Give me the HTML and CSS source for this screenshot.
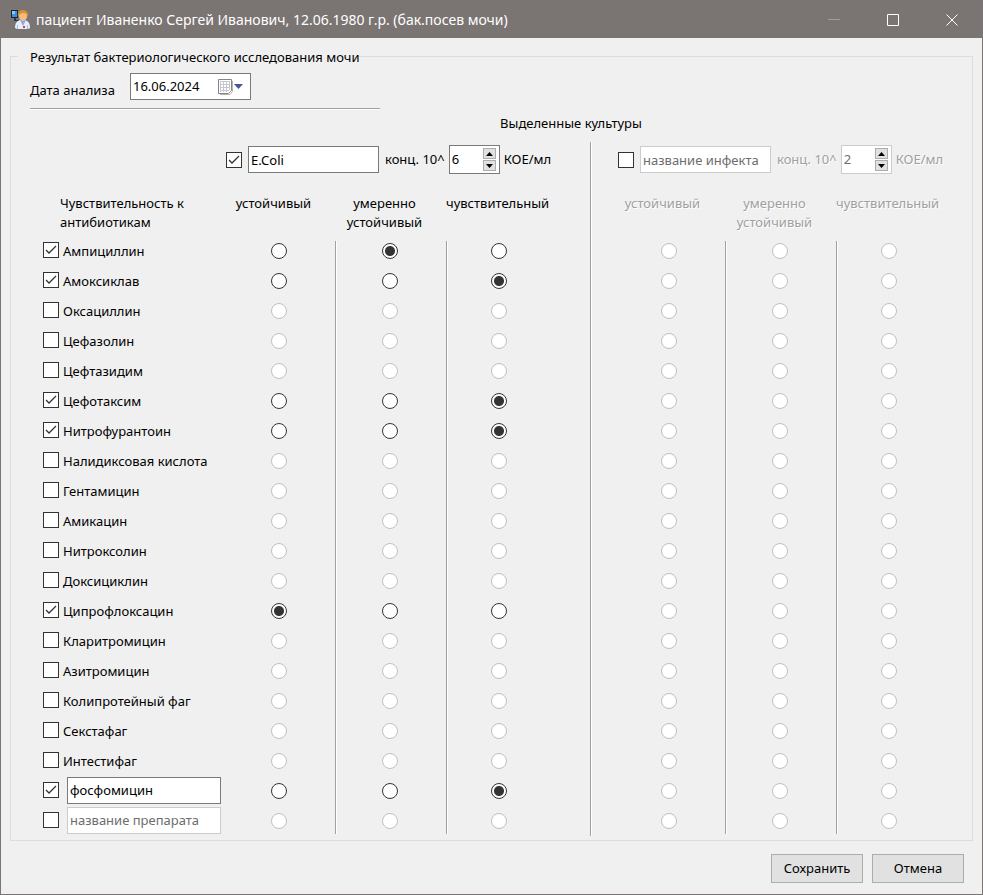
FILE: index.html
```html
<!DOCTYPE html>
<html lang="ru">
<head>
<meta charset="utf-8">
<title>пациент Иваненко Сергей Иванович, 12.06.1980 г.р. (бак.посев мочи)</title>
<link rel="stylesheet" href="styles.css">
</head>
<body>
<form class="window" id="analysis">
  <header class="titlebar">
    <svg class="app-icon" viewBox="0 0 22 22" aria-hidden="true">
      <rect x="1" y="1" width="7" height="8" fill="#1c2733"/>
      <rect x="2" y="2" width="5" height="6" fill="#3b8fe0"/>
      <rect x="2" y="2" width="3" height="3" fill="#8cc9fb"/>
      <path d="M4 9h2v2h3v1H4z" fill="#343638"/>
      <path d="M5 19c0-5 2-7 5-8h5c3 1 5 3 5 8l-2 1H7z" fill="#e7eefb"/>
      <path d="M10 11l3 6 3-6z" fill="#8aa9df"/>
      <path d="M7.500 16v4M17.500 16v4" stroke="#a9bde4"/>
      <ellipse cx="13" cy="7" rx="4" ry="5" fill="#f3bd83"/>
      <path d="M8 8c-1-5 2-7 5-7s6 2 5 7c-1-2-2-4-4-4-3 0-5 1-6 4z" fill="#d6932c"/>
      <rect x="13" y="17" width="2" height="2" fill="#e03636"/>
    </svg>
    <h1 class="title">пациент Иваненко Сергей Иванович, 12.06.1980 г.р. (бак.посев мочи)</h1>
    <button class="caption-button" type="button" aria-label="Свернуть" disabled>
      <svg viewBox="0 0 12 12"><path d="M0 5.500h12"/></svg>
    </button>
    <button class="caption-button" type="button" aria-label="Развернуть">
      <svg viewBox="0 0 12 12"><path d="M.5.5h11v11H.5z"/></svg>
    </button>
    <button class="caption-button" type="button" aria-label="Закрыть">
      <svg viewBox="0 0 12 12"><path d="M.5.5l11 11M11.500.5l-11 11"/></svg>
    </button>
  </header>

  <main class="content">
    <fieldset class="group">
      <legend class="group-title">Результат бактериологического исследования мочи</legend>

      <div class="date-row">
        <label for="date">Дата анализа</label>
        <div class="date-field">
          <input class="date-input" id="date" type="text" value="16.06.2024">
          <button class="date-button" type="button" aria-label="Открыть календарь">
            <svg viewBox="0 0 26 16">
              <path d="M2 15.500h10l2.500-3V2" fill="none" stroke="#b9b4b2"/>
              <path d="M.5.500h13v11l-3 3H.5z" fill="#fff" stroke="#8b8380"/>
              <path d="M2.500 2v11M5.500 2v11M8.500 2v11M11.500 2v9M2 2.500h10M2 5.500h10M2 8.500h10M2 11.500h9" stroke="#c3c7d2"/>
              <path d="M16 5h9l-4.500 5z" fill="#41598f"/>
            </svg>
          </button>
        </div>
      </div>
      <hr class="rule">

      <table class="cultures">
        <caption>Выделенные культуры</caption>
        <colgroup>
          <col class="col-name"><col class="col-mid"><col class="col-mid"><col class="col-end">
          <col class="col-start"><col class="col-mid"><col>
        </colgroup>
        <thead>
          <tr>
            <td></td>
            <td class="culture-cell" colspan="3">
              <div class="culture">
                <input class="check" type="checkbox" aria-label="Первая культура" checked>
                <input class="field field-culture" type="text" aria-label="Название инфекта" value="E.Coli">
                <label for="conc1">конц. 10^</label>
                <span class="spin">
                  <input class="spin-input" id="conc1" type="text" value="6">
                  <span class="spin-buttons">
                    <button class="spin-button" type="button" aria-label="Больше"><svg viewBox="0 0 7 4"><path d="M0 4h7L3.500 0z"/></svg></button>
                    <button class="spin-button" type="button" aria-label="Меньше"><svg viewBox="0 0 7 4"><path d="M0 0h7L3.500 4z"/></svg></button>
                  </span>
                </span>
                <span>КОЕ/мл</span>
              </div>
            </td>
            <td class="culture-cell second" colspan="3">
              <div class="culture off">
                <input class="check" type="checkbox" aria-label="Вторая культура">
                <input class="field field-culture" type="text" aria-label="Название инфекта" value="название инфекта" disabled>
                <label for="conc2">конц. 10^</label>
                <span class="spin">
                  <input class="spin-input" id="conc2" type="text" value="2" disabled>
                  <span class="spin-buttons">
                    <button class="spin-button" type="button" aria-label="Больше" disabled><svg viewBox="0 0 7 4"><path d="M0 4h7L3.500 0z"/></svg></button>
                    <button class="spin-button" type="button" aria-label="Меньше" disabled><svg viewBox="0 0 7 4"><path d="M0 0h7L3.500 4z"/></svg></button>
                  </span>
                </span>
                <span>КОЕ/мл</span>
              </div>
            </td>
          </tr>
          <tr class="heads">
            <th class="head-name" scope="col">Чувствительность к антибиотикам</th>
            <th scope="col">устойчивый</th>
            <th scope="col">умеренно устойчивый</th>
            <th class="end" scope="col">чувствительный</th>
            <th class="start off" scope="col">устойчивый</th>
            <th class="off" scope="col">умеренно устойчивый</th>
            <th class="last off" scope="col">чувствительный</th>
          </tr>
        </thead>
        <tbody id="drugs"></tbody>
      </table>
    </fieldset>
  </main>

  <footer class="actions">
    <button class="button" type="submit">Сохранить</button>
    <button class="button" type="button">Отмена</button>
  </footer>
</form>
<script src="script.js"></script>
</body>
</html>
```
FILE: styles.css
```css
* {
  box-sizing: border-box;
}

body {
  margin: 0;
  background: #f0f0f0;
  color: #000;
  font: 13px/19px "Noto Sans", "Open Sans", sans-serif;
}

input,
button {
  margin: 0;
  padding: 0;
  border: 0;
  border-radius: 0;
  color: inherit;
  font: inherit;
}

svg {
  display: block;
}

.window {
  display: flex;
  flex-direction: column;
  min-height: 100vh;
  border: 1px solid #7b7675;
}

/* Title bar */
.titlebar {
  display: flex;
  align-items: center;
  height: 37px;
  padding: 0 1px 0 9px;
  background: #7a7473;
  color: #fff;
}

.app-icon {
  width: 22px;
  height: 22px;
}

.title {
  flex: 1;
  margin: 0 0 0 4px;
  font-size: 14px;
  font-weight: 400;
  white-space: nowrap;
}

.caption-button {
  display: grid;
  place-items: center;
  width: 59px;
  height: 37px;
  background: none;
}

.caption-button svg {
  width: 12px;
  height: 12px;
  fill: none;
  stroke: #fff;
}

.caption-button:disabled svg {
  stroke: #a19c9b;
}

/* Result group */
.content {
  flex: 1;
  padding: 10px 9px 9px;
}

.group {
  min-width: 0;
  margin: 0;
  padding: 0 0 4px 19px;
  border: 1px solid #dcdcdc;
}

.group-title {
  height: 17px;
  margin-left: -12px;
  padding: 0 0 0 12px;
}

.date-row {
  display: flex;
  align-items: flex-end;
  gap: 15px;
  padding: 8px 0;
}

.date-field {
  display: flex;
  align-items: center;
  width: 121px;
  height: 27px;
  padding: 0 6px 0 2px;
  border: 1px solid #7a7a7a;
  background: #fff;
}

.date-input {
  flex: 1;
  min-width: 0;
  background: none;
}

.date-button {
  width: 26px;
  background: none;
}

.date-button svg {
  width: 26px;
  height: 16px;
}

.rule {
  width: 350px;
  height: 2px;
  margin: 0;
  border: 0;
  border-top: 1px solid #a0a0a0;
  background: #fff;
}

/* Cultures table */
.cultures {
  width: 100%;
  border-collapse: collapse;
  table-layout: fixed;
}

.cultures caption {
  padding: 4px 0 9px 140px;
}

.cultures td,
.cultures th {
  padding: 0;
}

.col-name {
  width: 194px;
}

.col-mid {
  width: 111px;
}

.col-end {
  width: 144px;
}

.col-start {
  width: 135px;
}

.cultures .culture-cell {
  height: 52px;
  padding: 3px 0 0 2px;
  vertical-align: top;
}

.culture {
  display: flex;
  align-items: center;
  gap: 6px;
  height: 29px;
  white-space: nowrap;
}

.off {
  color: #a0a0a0;
  text-shadow: 1px 1px #fff;
}

.heads th {
  height: 42px;
  padding-right: 12px;
  font-weight: 400;
  vertical-align: top;
}

.heads .head-name {
  padding: 0 30px;
  text-align: left;
}

.heads .end {
  padding-right: 42px;
}

.cultures .second,
.cultures .start {
  background: linear-gradient(90deg, #a0a0a0 1px, #fff 1px) left top / 2px 100% no-repeat;
}

.cultures .culture-cell.second {
  padding-left: 28px;
}

.cultures .start {
  padding-left: 24px;
}

.heads .start {
  padding-right: 14px;
}

.heads .last {
  padding-right: 34px;
}

.cultures .choice {
  height: 30px;
  padding-right: 2px;
  text-align: center;
}

.cultures .choice.end {
  padding-right: 38px;
}

.cultures .choice.last {
  padding-right: 30px;
}

.divided {
  background: linear-gradient(90deg, #a0a0a0 1px, #fff 1px) left top / 2px 100% no-repeat;
}

tr:first-child > .divided {
  background-position: left bottom;
  background-size: 2px 25px;
}

tr:last-child > .divided {
  background-size: 2px 28px;
}

.drug {
  display: flex;
  align-items: center;
  gap: 4px;
  height: 30px;
  padding: 0 0 2px 13px;
}

.drug label {
  padding-top: 2px;
}

.drug-custom {
  gap: 8px;
}

/* Controls */
.check {
  flex: none;
  appearance: none;
  width: 16px;
  height: 16px;
  border: 1px solid #333;
  background: #fff;
}

.check:checked {
  background: #fff url('data:image/svg+xml,<svg xmlns="http://www.w3.org/2000/svg" viewBox="0 0 14 14"><path d="M2 7l3 3 7-7" fill="none" stroke="%23333" stroke-width="1.300"/></svg>') center / 14px 14px no-repeat;
}

.choice input {
  display: block;
  appearance: none;
  width: 16px;
  height: 16px;
  margin: 0 auto;
  border: 1px solid #333;
  border-radius: 50%;
  background: #fff;
}

.choice input:checked {
  background: radial-gradient(circle, #333 4.500px, #fff 5.500px);
}

.choice input:disabled {
  border-color: #c0c0c0;
}

.field {
  height: 27px;
  padding: 0 2px;
  border: 1px solid #7a7a7a;
  background: #fff;
}

.field:disabled {
  border-color: #ccc;
  color: #6d6d6d;
}

.field-culture {
  width: 131px;
}

.field-drug {
  width: 154px;
}

.spin {
  display: flex;
  align-items: center;
  width: 51px;
  height: 29px;
  margin: 0 -2px;
  padding: 0 3px 0 2px;
  border: 1px solid #7a7a7a;
  background: #fff;
  text-shadow: none;
}

.off .spin {
  border-color: #ccc;
}

.spin-input {
  flex: 1;
  min-width: 0;
  background: none;
}

.spin-input:disabled {
  color: #6d6d6d;
}

.spin-buttons {
  display: flex;
  flex-direction: column;
  gap: 1px;
}

.spin-button {
  display: grid;
  place-items: center;
  width: 13px;
  height: 11px;
  border: 1px solid #adadad;
  background: #e1e1e1;
}

.spin-button svg {
  width: 7px;
  height: 4px;
  fill: #000;
}

/* Actions */
.actions {
  display: flex;
  justify-content: flex-end;
  gap: 9px;
  padding: 4px 18px 11px;
}

.button {
  width: 92px;
  height: 29px;
  border: 1px solid #adadad;
  background: #e1e1e1;
}
```
FILE: script.js
```js
// level: index of the selected sensitivity for the first culture
const drugs = [
  { name: 'Ампициллин', level: 1 },
  { name: 'Амоксиклав', level: 2 },
  { name: 'Оксациллин' },
  { name: 'Цефазолин' },
  { name: 'Цефтазидим' },
  { name: 'Цефотаксим', level: 2 },
  { name: 'Нитрофурантоин', level: 2 },
  { name: 'Налидиксовая кислота' },
  { name: 'Гентамицин' },
  { name: 'Амикацин' },
  { name: 'Нитроксолин' },
  { name: 'Доксициклин' },
  { name: 'Ципрофлоксацин', level: 0 },
  { name: 'Кларитромицин' },
  { name: 'Азитромицин' },
  { name: 'Колипротейный фаг' },
  { name: 'Секстафаг' },
  { name: 'Интестифаг' },
  { name: 'фосфомицин', level: 2, custom: true },
  { name: 'название препарата', custom: true }
];
const levels = ['устойчивый', 'умеренно устойчивый', 'чувствительный'];
const cellClasses = [
  ['', 'divided', 'divided end'],
  ['start', 'divided', 'divided last']
];

function nameCell(drug, row) {
  const active = drug.level !== undefined;
  const check = `<input class="check" type="checkbox" id="drug${row}" ${active ? 'checked' : ''}`;
  return drug.custom
    ? `<td><div class="drug drug-custom">${check} aria-label="Другой препарат">
        <input class="field field-drug" type="text" aria-label="Название препарата" value="${drug.name}" ${active ? '' : 'disabled'}></div></td>`
    : `<td><div class="drug">${check}><label for="drug${row}">${drug.name}</label></div></td>`;
}

function choiceCell(drug, row, culture, level) {
  const enabled = culture === 0 && drug.level !== undefined;
  const checked = enabled && drug.level === level;
  return `<td class="choice ${cellClasses[culture][level]}"><input type="radio" name="c${culture}r${row}"
    aria-label="${drug.name}: ${levels[level]}" ${enabled ? '' : 'disabled'} ${checked ? 'checked' : ''}></td>`;
}

document.getElementById('drugs').innerHTML = drugs.map((drug, row) => {
  const choices = [0, 1].map(culture =>
    levels.map((_, level) => choiceCell(drug, row, culture, level)).join('')).join('');
  return `<tr>${nameCell(drug, row)}${choices}</tr>`;
}).join('');
```
